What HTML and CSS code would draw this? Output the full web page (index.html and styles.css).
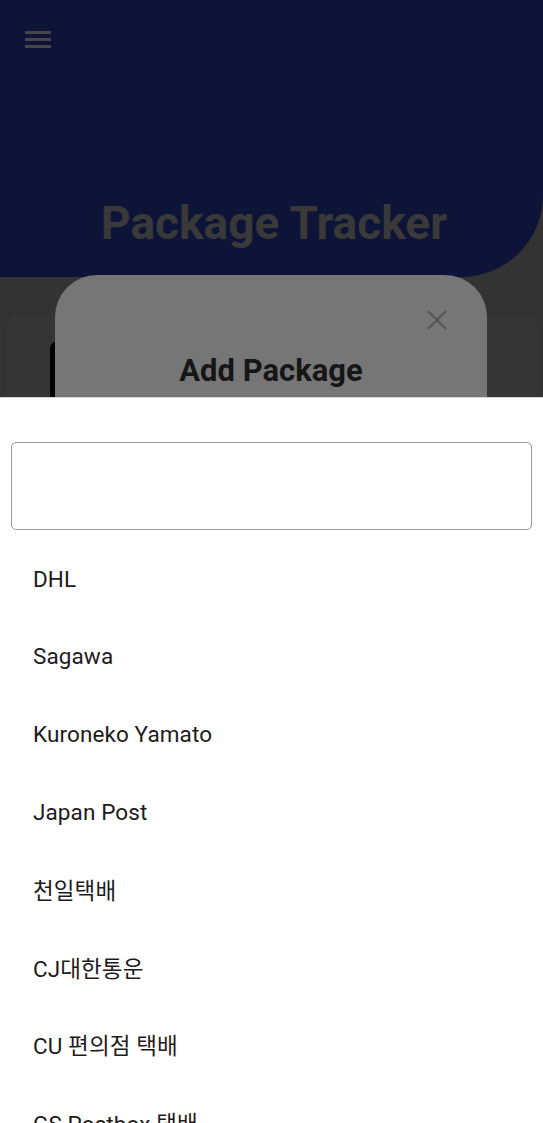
FILE: index.html
```html
<!DOCTYPE html>
<html>
<head>
<meta charset="utf-8">
<link rel="stylesheet" href="styles.css">
</head>
<body>
<div class="app">
  <header class="header">
    <div class="menu" aria-label="menu"><span></span><span></span><span></span></div>
    <h1 class="title">Package Tracker</h1>
  </header>
  <div class="bg-card"><div class="bg-inner"></div></div>

  <div class="dialog">
    <svg class="close" width="22" height="22" viewBox="0 0 22 22"><path d="M2 2L20 20M20 2L2 20" stroke="#555" stroke-width="2"/></svg>
    <h2 class="dialog-title">Add Package</h2>
  </div>

  <div class="sheet">
    <div class="search"></div>
    <ul class="list">
      <li>DHL</li>
      <li>Sagawa</li>
      <li>Kuroneko Yamato</li>
      <li>Japan Post</li>
      <li>천일택배</li>
      <li>CJ대한통운</li>
      <li>CU 편의점 택배</li>
      <li>GS Postbox 택배</li>
    </ul>
  </div>
</div>
</body>
</html>
```

FILE: styles.css
```css
html, body {
  margin: 0;
  padding: 0;
}
body {
  font-family: Roboto, "Noto Sans CJK KR", sans-serif;
  background: #333333;
}
.app {
  position: relative;
  width: 543px;
  height: 1123px;
  overflow: hidden;
  background: #333333;
}
.header {
  height: 277px;
  background: #0d1438;
  border-bottom-right-radius: 82px;
  display: flex;
  flex-direction: column;
  box-sizing: border-box;
  padding: 31px 0 0 25px;
}
.menu {
  width: 26px;
  display: flex;
  flex-direction: column;
  gap: 4px;
}
.menu span {
  display: block;
  height: 3px;
  background: #464646;
}
.title {
  margin: 147px 20px 0 0;
  text-align: center;
  font-size: 46px;
  font-weight: 700;
  color: #393939;
  letter-spacing: 0;
  line-height: 56px;
}
.bg-card {
  margin: 39px 5px 0 5px;
  height: 200px;
  border-radius: 14px;
  background: #353535;
  padding: 25px 0 0 45px;
  box-sizing: border-box;
}
.bg-inner {
  width: 20px;
  height: 80px;
  background: #000;
  border-top-left-radius: 8px;
}
.dialog {
  position: absolute;
  left: 55px;
  top: 275px;
  width: 432px;
  height: 300px;
  background: #767676;
  border-radius: 42px;
}
.close {
  position: absolute;
  right: 39px;
  top: 34px;
}
.dialog-title {
  margin: 77px 0 0 0;
  text-align: center;
  font-size: 31px;
  font-weight: 700;
  color: #161616;
  line-height: 38px;
}
.sheet {
  position: absolute;
  left: 0;
  right: 0;
  top: 397px;
  bottom: 0;
  background: #fff;
  border-top: 1px solid #d6d6d6;
  padding: 44px 11px 0 11px;
}
.search {
  height: 86px;
  border: 1px solid #999;
  border-radius: 5px;
}
.list {
  list-style: none;
  margin: 10px 0 0 0;
  padding: 0;
}
.list li {
  height: 77.6px;
  display: flex;
  align-items: center;
  padding-left: 22px;
  font-size: 22.5px;
  letter-spacing: 0.1px;
  color: #1d1b20;
}
```
